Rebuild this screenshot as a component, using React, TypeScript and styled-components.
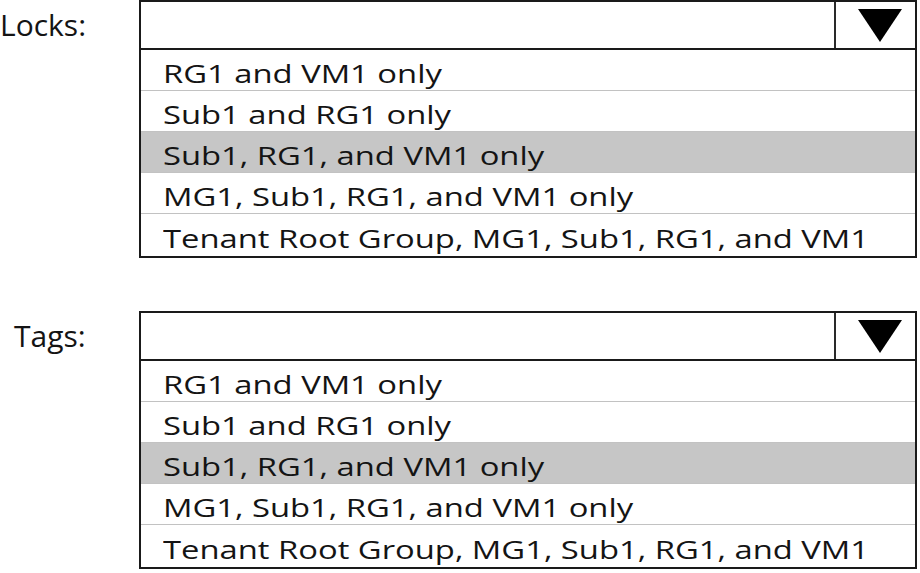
import React from "react";
import styled, { createGlobalStyle } from "styled-components";

const GlobalStyle = createGlobalStyle`
  html, body {
    margin: 0;
    padding: 0;
    background: #ffffff;
  }
  body {
    font-family: "Open Sans", "Liberation Sans", sans-serif;
    color: #141414;
  }
`;

const Page = styled.div`
  width: 920px;
  height: 573px;
  display: flex;
  flex-direction: column;
  gap: 53px;
  overflow: hidden;
`;

const Group = styled.div`
  display: flex;
  align-items: flex-start;
`;

const Label = styled.div<{ $indent: number }>`
  width: 139px;
  height: 50px;
  box-sizing: border-box;
  padding-left: ${(p) => p.$indent}px;
  display: flex;
  align-items: center;
  font-size: 30px;
  line-height: 1;
`;

const Select = styled.div`
  width: 778px;
  border: 2px solid #1a1a1a;
  box-sizing: border-box;
  display: flex;
  flex-direction: column;
`;

const Header = styled.div`
  height: 46px;
  display: flex;
  border-bottom: 2px solid #1a1a1a;
`;

const Field = styled.div`
  flex: 1;
  border-right: 2px solid #2a2a2a;
`;

const ArrowCell = styled.div`
  width: 79px;
  display: flex;
  align-items: center;
  justify-content: center;
  padding-left: 8px;
  box-sizing: border-box;
`;

const Option = styled.div<{ $selected?: boolean }>`
  height: 41px;
  box-sizing: border-box;
  display: flex;
  align-items: center;
  padding: 6px 0 0 22px;
  font-size: 26px;
  white-space: nowrap;
  background: ${(p) => (p.$selected ? "#c6c6c6" : "#ffffff")};
  border-bottom: 1px solid #c2c2c2;
  &:last-child {
    border-bottom: none;
    height: 42px;
  }
`;

// the source image is stretched sideways, so the option text is widened to match
const OptionText = styled.span`
  display: inline-block;
  transform: scaleX(1.26);
  transform-origin: left center;
`;

const options = [
  "RG1 and VM1 only",
  "Sub1 and RG1 only",
  "Sub1, RG1, and VM1 only",
  "MG1, Sub1, RG1, and VM1 only",
  "Tenant Root Group, MG1, Sub1, RG1, and VM1",
];

function Dropdown({ label, indent }: { label: string; indent: number }) {
  return (
    <Group>
      <Label $indent={indent}>{label}</Label>
      <Select>
        <Header>
          <Field />
          <ArrowCell>
            <svg width="44" height="33" viewBox="0 0 44 33">
              <polygon points="0,0 44,0 22,33" fill="#000" />
            </svg>
          </ArrowCell>
        </Header>
        {options.map((o, i) => (
          <Option key={o} $selected={i === 2}>
            <OptionText>{o}</OptionText>
          </Option>
        ))}
      </Select>
    </Group>
  );
}

export default function App() {
  return (
    <Page>
      <GlobalStyle />
      <Dropdown label="Locks:" indent={0} />
      <Dropdown label="Tags:" indent={14} />
    </Page>
  );
}
